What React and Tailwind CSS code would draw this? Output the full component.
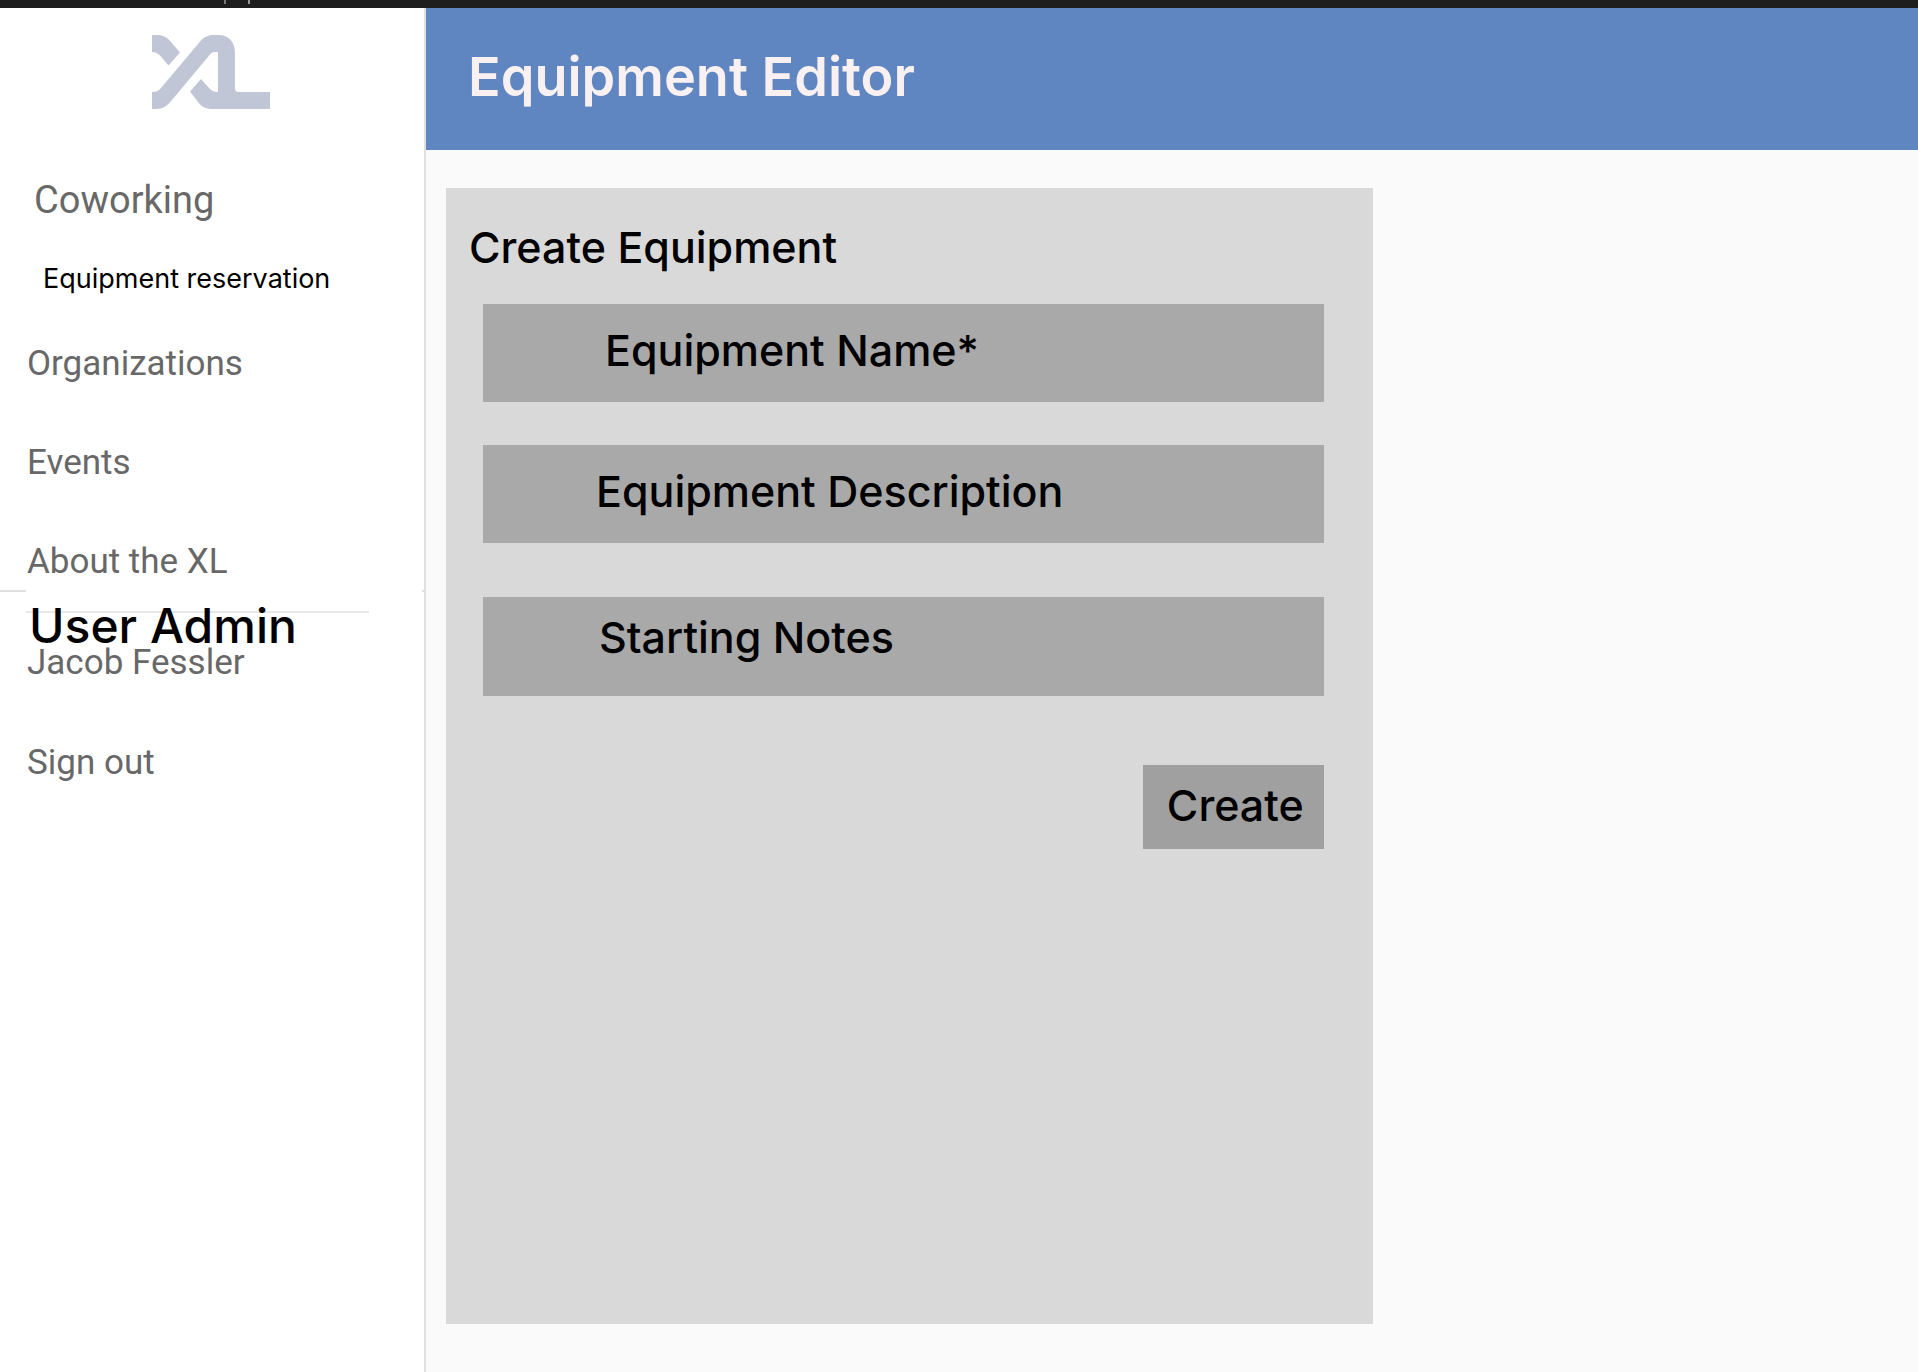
const fields = [
  { id: 'name', label: 'Equipment Name*', className: 'h-[98px] pl-[122px] pb-[7px]' },
  { id: 'description', label: 'Equipment Description', className: 'mt-[43px] h-[98px] pl-[113px] pb-[7px]' },
  { id: 'notes', label: 'Starting Notes', className: 'mt-[54px] h-[99px] pl-[116px] pb-[19px]' },
];

function Logo() {
  return (
    <svg viewBox="0 0 118 74" className="h-[74px] w-[118px]" role="img" aria-label="XL" fill="#c1c6d6">
      <path d="M0 0H5C11 0 15 2 19 7L28 17.500L16.500 30.500L8 20.500C5.500 18 3 17 0 17Z" />
      <path d="M0 74V57C4 57 6.500 56 9 53L46 9C51 2.500 55 0 62 0H66C77 0 83 7 83 18V53C83 56 84 57 87 57H118V74H60C54 74 50 72 46 67L38 56.500L49 44L58 54C60 56 62 57 66 57V17H63C61 17 60 17.500 58 19.500L20 65C15 71 11 74 4 74Z" />
    </svg>
  );
}

function NavLink({ className = '', children }) {
  return (
    <a href="#" className={`block font-['Roboto',sans-serif] leading-10 text-[#686868] ${className}`}>
      {children}
    </a>
  );
}

function Sidebar() {
  return (
    <aside className="w-[426px] shrink-0 border-r-2 border-[#e0e0e0] bg-white">
      <div className="pt-[27px] pl-[152px]">
        <Logo />
      </div>
      <nav className="mt-[71px]">
        <NavLink className="pl-[34px] text-[38px]">Coworking</NavLink>
        <a href="#" className="mt-[43px] block pl-[43px] text-[27px] leading-8 text-black">
          Equipment reservation
        </a>
        <div className="mt-[49px] flex flex-col gap-[59px] pl-[27px]">
          <NavLink className="text-[35px]">Organizations</NavLink>
          <NavLink className="text-[35px]">Events</NavLink>
          <NavLink className="text-[35px]">About the XL</NavLink>
        </div>
        <div className="mt-2 flex justify-between">
          <span className="h-0.5 w-[26px] bg-[#e0e0e0]" />
          <span className="h-0.5 w-0.5 bg-[#e0e0e0]" />
        </div>
        <hr className="mt-[19px] mr-[55px] ml-[26px] border-t-2 border-[#e8e8e8]" />
        <div className="-mt-[11px] flex flex-col pl-[27px]">
          <a href="#" className="relative z-10 pl-0.5 text-5xl leading-12 font-medium text-black">
            User Admin
          </a>
          <NavLink className="-mt-[7px] text-[35px]">Jacob Fessler</NavLink>
          <NavLink className="mt-[60px] text-[35px]">Sign out</NavLink>
        </div>
      </nav>
    </aside>
  );
}

function EquipmentForm() {
  return (
    <form className="flex flex-col bg-[#d9d9d9] pt-[35px] pr-[49px] pl-[37px]" onSubmit={(e) => e.preventDefault()}>
      <h2 className="-ml-[14px] text-[43px] leading-12 font-medium">Create Equipment</h2>
      <div className="mt-[33px] flex flex-col">
        {fields.map((f) => (
          <input
            key={f.id}
            id={f.id}
            name={f.id}
            type="text"
            aria-label={f.label}
            placeholder={f.label}
            className={`w-full bg-[#a9a9a9] text-[43px] font-medium text-black placeholder:text-black placeholder:opacity-100 ${f.className}`}
          />
        ))}
      </div>
      <button type="submit" className="mt-[69px] h-[84px] w-[181px] self-end bg-[#a0a0a0] pb-1 pl-1 text-[43px] font-medium">
        Create
      </button>
    </form>
  );
}

export default function App() {
  return (
    <div className="flex min-h-screen flex-col bg-[#fafafa] font-['Inter',sans-serif] text-black">
      <div className="flex h-2 items-start gap-[22px] bg-[#1e1e1e] pl-[224px]">
        <span className="h-1 w-0.5 bg-[#777777]" />
        <span className="h-1 w-0.5 bg-[#999999]" />
      </div>
      <div className="flex flex-1">
        <Sidebar />
        <main className="flex min-w-0 flex-1 flex-col">
          <header className="flex h-[142px] items-center bg-[#5f86c1] pb-1 pl-[42px]">
            <h1 className="text-[54px] leading-none font-semibold text-[#f9f0f2]">Equipment Editor</h1>
          </header>
          <div className="mt-[38px] mb-12 ml-5 grid flex-1 grid-cols-[17fr_10fr]">
            <EquipmentForm />
          </div>
        </main>
      </div>
    </div>
  );
}
